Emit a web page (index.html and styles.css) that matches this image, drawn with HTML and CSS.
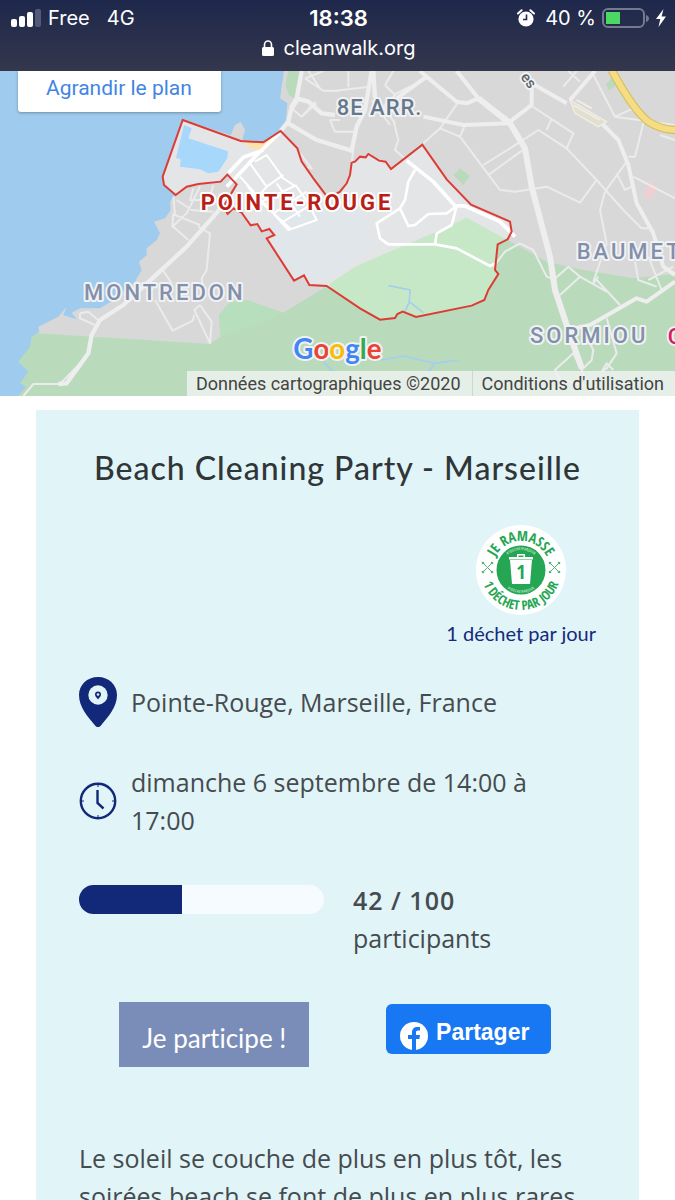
FILE: index.html
```html
<!DOCTYPE html>
<html lang="fr">
<head>
<meta charset="utf-8">
<meta name="viewport" content="width=device-width, initial-scale=1">
<title>Beach Cleaning Party - Marseille</title>
<link rel="stylesheet" href="styles.css">
</head>
<body>
<div class="screen">
  <header class="topbar">
    <div class="status">
      <div class="status-side">
        <svg class="signal" viewBox="0 0 30 18" aria-hidden="true">
          <rect x="0" y="10" width="6" height="8" rx="2"/><rect x="8" y="7" width="6" height="11" rx="2"/><rect x="16" y="3" width="6" height="15" rx="2"/><rect class="faint" x="24" y="0" width="6" height="18" rx="2"/>
        </svg>
        <span>Free</span><span class="network">4G</span>
      </div>
      <time class="clock">18:38</time>
      <div class="status-side status-right">
        <svg class="alarm" viewBox="0 0 18 18" aria-hidden="true">
          <circle cx="9" cy="10" r="7.6" fill="#fff"/><path d="M1 4.5 4.6 1.2M17 4.5 13.4 1.2" stroke="#fff" stroke-width="2" stroke-linecap="round"/><path d="M9.5 5.5v5H6" fill="none" stroke="#222b4c" stroke-width="1.6"/>
        </svg>
        <span class="percent">40 %</span>
        <svg class="battery" viewBox="0 0 48 20" aria-hidden="true">
          <rect x="1" y="1" width="41" height="18" rx="5" fill="none" stroke="#747b91" stroke-width="2"/><rect x="4" y="4" width="14" height="12" fill="#4bd964"/><path d="M44 7c4 1 4 6 0 7z" fill="#747b91"/>
        </svg>
        <svg class="bolt" viewBox="0 0 10 18" aria-hidden="true"><path d="M7.5 0 0 10h4.3L2.5 18 10 7.4H5.6z" fill="#fff"/></svg>
      </div>
    </div>
    <div class="address">
      <svg class="lock" viewBox="0 0 12 16" aria-hidden="true"><rect x="0" y="7" width="12" height="9" rx="1.5" fill="#fff"/><path d="M2.5 8V4.5a3.5 3.5 0 0 1 7 0V8" fill="none" stroke="#fff" stroke-width="1.6"/></svg>
      <span>cleanwalk.org</span>
    </div>
  </header>

  <section class="map" aria-label="Carte de Pointe-Rouge">
    <svg class="map-canvas" viewBox="0 3 2025 975" role="img" aria-label="Plan du quartier Pointe-Rouge, Marseille">
      <defs>
        <path id="district" d="M548 150 722 213 790 217 842 183 892 235 905 275 940 325 985 385 1020 365 1040 340 1050 315 1055 278 1065 275 1080 260 1097 262 1105 252 1137 272 1157 275 1173 297 1267 224 1340 328 1413 404 1530 455 1535 485 1523 508 1493 523 1485 600 1495 612 1465 660 1453 690 1415 707 1248 741 1208 725 1192 732 1185 744 1140 749 1080 715 980 648 928 645 912 616 882 632 800 505 823 495 808 477 785 484 772 462 752 466 725 428 700 415 683 432 670 410 710 343 682 314 662 335 595 342 560 350 527 375 492 345 488 320Z"/>
        <clipPath id="inside"><use href="#district"/></clipPath>
      </defs>
      <rect y="3" width="2025" height="975" fill="#d8d8d8"/>
      <path class="park" d="M0 780 110 790 630 822 662 800 657 735 690 697 740 690 850 728 1010 630Q1130 540 1250 510L1400 445 1560 530 1640 575 1750 600 1900 625 2025 612V978H0Z"/>
      <path d="M662 802 657 735 690 697 740 690 846 728 800 752Z" fill="#b8dfbd"/>
      <path class="water" d="M0 3H852L840 85 862 100 858 150 842 183 790 217 727 210 735 180 722 155 705 165 692 195 548 150 488 320 492 345 527 375 510 395 512 420 495 445 462 455 480 490 470 510 440 535 440 555 417 575 425 600 405 635 340 690 300 715 240 715 215 728 230 748 190 735 200 710 175 740 115 770 118 785 95 800 90 830 55 875 85 905 60 940 78 950 55 978H0Z"/>
      <path class="park" d="M865 3H900L885 85 868 78 856 45Z"/>
      <g clip-path="url(#inside)">
        <rect x="480" y="140" width="1080" height="640" fill="#e4e5e7"/>
        <path d="M850 400 1080 420 1120 520 1010 620 900 640 800 505Z" fill="#e1e6eb"/>
        <path d="M990 640 1065 590 1180 540 1310 485 1400 443 1560 530V780H1000Z" fill="#c7e8c7"/>
        <path d="M552 165 575 175 565 205 684 244 682 265 655 305 625 310 600 298 540 290 542 268 528 264Z" fill="#a8d7fc"/>
        <path d="M725 215 830 207 790 242Q765 245 725 215Z" fill="#fbe3ae"/>
      </g>
      <path class="park" d="M1360 315 1380 295 1410 318 1390 345ZM1818 42 1840 18 1855 42 1827 60Z"/>
      <path d="M1930 370 1950 335 1972 345 1955 390Z" fill="#efcfcf"/>

      <g class="road minor">
        <path d="M70 978 100 942H180L240 880M240 730 265 725 300 755M240 730V745L285 765M465 690 518 782 578 752 583 735M600 705 635 755 630 820 583 720 600 705M485 595 515 640M595 470 630 490 620 600 605 625 610 660M520 380 525 435 600 465M520 470 565 510M520 430 517 470 560 430 580 390 600 350M530 390 575 420 640 425M580 355 570 390 620 390M640 345 630 380"/>
        <path d="M915 25 970 62H1020M915 25 970 3M925 3 960 55M870 130 900 85M875 115 905 140 945 95M905 140 950 100M990 150H1020M990 150 1005 185H1020M900 250 935 295 915 290M1045 3V52M1005 62 1110 50M1155 45 1185 75 1150 110 1185 160M1155 45 1180 3M1180 75 1280 25M1115 90 1170 165M1180 150 1195 210 1185 240 1225 275M1010 185H1065M1060 240 1055 280"/>
        <path d="M1372 100 1320 175 1270 220M1320 175 1380 200 1440 280 1500 360 1545 365 1640 350 1740 398 1790 330 1700 235 1615 180 1530 235 1450 285M1380 200 1395 165M1465 315 1575 235M1640 180 1655 145M1595 108 1720 190 1700 235M1780 15 1845 140 2025 165M1845 140 1900 115M1930 160 1905 260H1885M1690 50 1730 3M1705 3 1740 35M1790 330 1870 420 1925 475H1945M1815 365 1880 275M1850 310 1875 360 1895 350M1815 365 1800 420 1820 520 1780 635M1900 320 2025 385M1970 650 1915 630 1905 575M1945 630 2020 590M1945 560 1985 660M1980 195 2025 210"/>
        <path d="M1560 520 1600 540 1640 620 1655 625M1560 520 1515 545 1480 590M1660 630 1705 590 1740 620 1820 665M1680 675 1740 620M1790 630 1860 705M1780 640 1795 620M1820 745 1850 850 1820 895 1805 905 1820 880 1840 900M1740 765 1780 840 1775 870 1745 900M1745 900 1720 850 1665 900 1690 950M1745 900 1765 950 1690 930"/>
      </g>
      <g class="road">
        <path d="M175 942 200 940 265 850 275 795 300 750 370 705 430 650 560 530 640 440 700 370" stroke-width="13"/>
        <path d="M842 183 865 155 875 110 890 85 905 3M890 85 925 95 965 130 1005 135M865 160 950 210 1055 242 1070 170 1095 120 1115 3M1120 3 1125 85" stroke-width="13"/>
        <path d="M1190 85 1280 20 1370 95 1400 100 1435 85 1370 3M1280 20 1260 3M1435 85 1530 155 1595 105V40M1595 40 1700 100M1270 140 1390 165 1530 160" stroke-width="12"/>
        <path d="M1435 85 1530 160 1575 235 1595 350 1650 560 1665 660 1705 780 1745 895" stroke-width="18"/>
        <path d="M1800 155 1855 210 1885 285 1910 400 1960 490 1990 590 2025 615M1705 780 1770 765 1910 685 1940 695 2025 635M1710 90 1785 3" stroke-width="12"/>
      </g>
      <path d="M1710 90 1820 155 1795 170 1725 130Z" fill="#e2dfd0" stroke="#f0eee4" stroke-width="4"/>
      <path d="M1720 105 1800 150M1730 90 1775 115" stroke="#f0eee4" stroke-width="6"/>
      <path d="M1835 0Q1900 120 1945 155 1985 180 2030 180" fill="none" stroke="#d8bd61" stroke-width="25"/>
      <path d="M1835 0Q1900 120 1945 155 1985 180 2030 180" fill="none" stroke="#f5dd83" stroke-width="18"/>
      <g class="road inner">
        <path d="M840 187 770 255 710 320 680 350M790 240 730 262 685 310 M1220 272 1300 335 1365 407 1395 408 1500 455 1545 500" stroke-width="11"/>
        <path d="M765 275 800 255 850 325 880 345 890 350 925 400 950 450 865 480 720 320M750 280 800 350 770 385 740 345M800 350 850 315M785 395 890 345M820 430 920 365M850 455 940 400M830 340 900 440M770 385 870 475"/>
        <path d="M1245 300 1225 335 1215 390 1200 415 1130 460 1140 505 1165 523H1305L1370 535 1470 588 1485 580M1200 415 1225 468 1245 465 1285 432 1340 430 1370 408 1355 465 1310 490 1305 525" stroke-width="8"/>
      </g>
      <path d="M1165 647 1230 660 1228 695 1270 728M1228 695 1215 725M1145 870 1210 858 1305 880 1375 870M1305 880 1285 905M970 875 1000 905" fill="none" stroke="#a3cef0" stroke-width="5"/>
      <use href="#district" fill="none" stroke="#dc3c35" stroke-width="6"/>

      <g class="map-label">
        <text x="252" y="690">MONTREDON</text>
        <text x="1730" y="568">BAUMETTES</text>
        <text x="1590" y="820">SORMIOU</text>
        <text class="district-name" x="602" y="419">POINTE-ROUGE</text>
        <text class="arr" x="1010" y="136">8E ARR.</text>
        <text class="poi" x="2003" y="822">C</text>
        <text class="street" x="1560" y="22" transform="rotate(52 1560 22)">es</text>
        <text class="google" x="880" y="866"><tspan fill="#4285f4">G</tspan><tspan fill="#ea4335">o</tspan><tspan fill="#fbbc05">o</tspan><tspan fill="#4285f4">g</tspan><tspan fill="#34a853">l</tspan><tspan fill="#ea4335">e</tspan></text>
      </g>
    </svg>
    <a class="enlarge" href="#plan">Agrandir le plan</a>
    <div class="credits"><span>Données cartographiques ©2020</span><a href="#conditions">Conditions d'utilisation</a></div>
  </section>

  <main class="card">
    <h1>Beach Cleaning Party - Marseille</h1>

    <a class="organizer" href="#organisateur">
      <svg viewBox="0 0 90 90" aria-hidden="true">
        <defs><path id="arc-top" d="M16 45a29 29 0 0 1 58 0"/><path id="arc-bottom" d="M5 45a40 40 0 0 0 80 0"/><path id="ring-top" d="M25 45a20 20 0 0 1 40 0"/><path id="ring-bottom" d="M22 45a23 23 0 0 0 46 0"/></defs>
        <circle cx="45" cy="45" r="45" fill="#fff"/>
        <circle cx="45" cy="45" r="24.5" fill="#25a653"/>
        <g class="badge-text" text-anchor="middle">
          <text><textPath href="#arc-top" startOffset="50%">JE RAMASSE</textPath></text>
          <text class="low"><textPath href="#arc-bottom" startOffset="50%">1 DÉCHET PAR JOUR</textPath></text>
          <text class="tiny"><textPath href="#ring-top" startOffset="50%">#1DECHETPARJOUR</textPath></text>
          <text class="tiny"><textPath href="#ring-bottom" startOffset="50%">#1DECHETPARJOUR</textPath></text>
        </g>
        <path d="M34 35h22l-2 24H36zM33 32h24v2.500H33zM41 32v-3h8v3h-1.500v-1.500h-5V32z" fill="#fff"/>
        <text class="bin-number" x="45" y="54" text-anchor="middle">1</text>
        <path d="m7 38 9 9m0-9-9 9m67-9 9 9m0-9-9 9" stroke="#57b278"/>
        <g fill="#57b278"><circle cx="7" cy="38" r="1.300"/><circle cx="16" cy="38" r="1.300"/><circle cx="7" cy="47" r="1.300"/><circle cx="16" cy="47" r="1.300"/><circle cx="74" cy="38" r="1.300"/><circle cx="83" cy="38" r="1.300"/><circle cx="74" cy="47" r="1.300"/><circle cx="83" cy="47" r="1.300"/></g>
      </svg>
      <span>1 déchet par jour</span>
    </a>

    <div class="details">
      <svg class="pin" viewBox="0 0 38 50" aria-hidden="true">
        <path d="M19 0C8 0 0 8 0 18c0 12 9 22 16.500 31q2.500 2.500 5 0C29 40 38 30 38 18 38 8 30 0 19 0Z" fill="#122878"/><circle cx="19" cy="18" r="9.700" fill="#e1f4f8"/><path d="M19 14.500a3 3 0 0 0-3 3c0 2 2 3.500 3 5 1-1.500 3-3 3-5a3 3 0 0 0-3-3Z" fill="#122878"/><circle cx="19" cy="17.500" r="1.300" fill="#e1f4f8"/>
      </svg>
      <p>Pointe-Rouge, Marseille, France</p>
      <svg class="time" viewBox="0 0 38 38" aria-hidden="true">
        <circle cx="19" cy="19" r="17.200"/><path d="M18.500 8v13l6 5.500"/><path class="ticks" d="M19 2v3M19 33v3M2 19h3M33 19h3"/>
      </svg>
      <p>dimanche 6 septembre de 14:00 à 17:00</p>
    </div>

    <div class="attendance">
      <div class="bar" role="progressbar" aria-label="Participants" aria-valuemin="0" aria-valuemax="100" aria-valuenow="42"><div class="bar-fill" style="width:42%"></div></div>
      <p><strong>42 / 100</strong><br>participants</p>
    </div>

    <div class="actions">
      <button class="join" type="button">Je participe !</button>
      <button class="share" type="button">
        <svg viewBox="0 0 28 28" aria-hidden="true"><circle cx="14" cy="14" r="14" fill="#fff"/><path d="M12 28V17H8v-4h4v-2.500C12 7 14 5 17.200 5h2.800v3.500h-2c-1.500 0-2 .8-2 2V13h4l-.6 4H16v11Z" fill="#1877f2"/></svg>
        <span>Partager</span>
      </button>
    </div>

    <p class="description">Le soleil se couche de plus en plus tôt, les soirées beach se font de plus en plus rares</p>
  </main>
</div>
</body>
</html>
```

FILE: styles.css
```css
* { box-sizing: border-box; }
body { margin: 0; background: #fff; color: #454b4e; font-family: "Open Sans", sans-serif; }
p, h1 { margin: 0; }
svg { display: block; flex: none; }
a { text-decoration: none; }
.screen { height: 100vh; overflow: hidden; }

.topbar { height: 71px; padding: 4px 9px 0 11px; background: linear-gradient(#1e284c, #34374c); color: #fff; font: 20px/28px Inter, sans-serif; }
.status { display: grid; grid-template-columns: 1fr auto 1fr; align-items: center; }
.status-side { display: flex; align-items: center; gap: 7px; }
.status-right { justify-content: flex-end; gap: 6px; }
.signal { width: 30px; height: 18px; fill: #fff; }
.signal .faint { fill: #515a78; }
.network { margin-left: 10px; }
.clock { font-size: 22px; font-weight: 600; }
.alarm { width: 18px; height: 18px; }
.percent { margin-left: 4px; }
.battery { width: 48px; height: 20px; }
.bolt { width: 10px; height: 18px; }
.address { display: flex; justify-content: center; align-items: center; gap: 10px; line-height: 32px; }
.lock { width: 12px; height: 16px; }

.map { position: relative; overflow: hidden; font-family: Roboto, sans-serif; }
.map-canvas { width: 100%; height: auto; }
.water { fill: #9ecbee; }
.park { fill: #b9dbbc; }
.road { fill: none; stroke: #eeeeef; stroke-linejoin: round; stroke-width: 6; }
.road.minor { stroke: #ebebec; }
.road.inner { stroke: #fff; }
.map-label { font-size: 66px; font-weight: 500; letter-spacing: 9px; fill: #8390ac; stroke: #f1f2f3; stroke-width: 12px; stroke-linejoin: round; paint-order: stroke; }
.map-label .district-name { fill: #b91f17; font-weight: 700; stroke: #fff; }
.map-label .arr { fill: #66788c; letter-spacing: 3px; }
.map-label .poi { fill: #d81b60; }
.map-label .street { fill: #5b6266; font-size: 44px; letter-spacing: 0; }
.map-label .google { font-family: Lato, sans-serif; font-size: 83px; font-weight: 700; letter-spacing: 0; }
.enlarge { position: absolute; left: 18px; top: 0; padding: 2px 29px 9px 28px; background: #fff; border-radius: 0 0 3px 3px; box-shadow: 0 1px 3px rgba(0, 0, 0, .3); color: #4285e4; font-size: 21px; line-height: 30px; }
.credits { position: absolute; right: 0; bottom: 0; display: flex; background: rgba(239, 243, 240, .82); color: #444; font-size: 18px; line-height: 25px; }
.credits > * { padding: 0 11px 0 9px; color: inherit; }
.credits a { border-left: 1px solid #cbd8d0; }

.card { margin: 14px 36px 0; padding: 38px 43px; background: #e1f4f8; }
h1 { text-align: center; color: #303638; font: 500 32px/40px Lato, sans-serif; letter-spacing: 1px; }
.organizer { display: flex; flex-direction: column; align-items: center; gap: 5px; width: max-content; margin: 37px 0 0 auto; color: #142a7c; font: 20px/26px Lato, sans-serif; }
.organizer svg { width: 90px; height: 90px; }
.badge-text { fill: #25a653; font: 14px "Open Sans Condensed", "Open Sans", sans-serif; }
.badge-text .low { font-size: 13px; }
.badge-text .tiny { fill: #a8dcb9; font-size: 4px; }
.bin-number { fill: #25a653; font: 700 20px "Open Sans Condensed", sans-serif; }

.details { display: grid; grid-template-columns: 38px 1fr; align-items: center; column-gap: 14px; row-gap: 36px; margin-top: 31px; }
.details p, .attendance p, .description { font-size: 25px; line-height: 38px; }
.pin { width: 38px; height: 50px; }
.time { width: 38px; height: 38px; fill: none; stroke: #122878; stroke-width: 2.400; }
.ticks { stroke-width: 1; }

.attendance { display: grid; grid-template-columns: 245px 1fr; column-gap: 29px; margin-top: 42px; }
.attendance strong { font-weight: 600; letter-spacing: 1px; }
.bar { height: 29px; margin-top: 4px; border-radius: 15px; overflow: hidden; background: #f5fbff; }
.bar-fill { height: 100%; background: #122878; }

.actions { display: grid; grid-template-columns: 1fr 1fr; align-items: start; justify-items: center; margin-top: 45px; padding-left: 8px; }
button { border: 0; color: #fff; }
.join { height: 65px; padding: 6px 23px 0; background: #7a8db8; font: 26px/32px Lato, sans-serif; font-variant-ligatures: none; }
.share { display: flex; align-items: flex-end; gap: 8px; height: 50px; margin-top: 2px; padding: 0 22px 4px 14px; border-radius: 6px; background: #1877f2; font: 700 23px/36px "Liberation Sans", sans-serif; }
.share svg { width: 28px; height: 28px; }
.description { margin-top: 72px; }
```
